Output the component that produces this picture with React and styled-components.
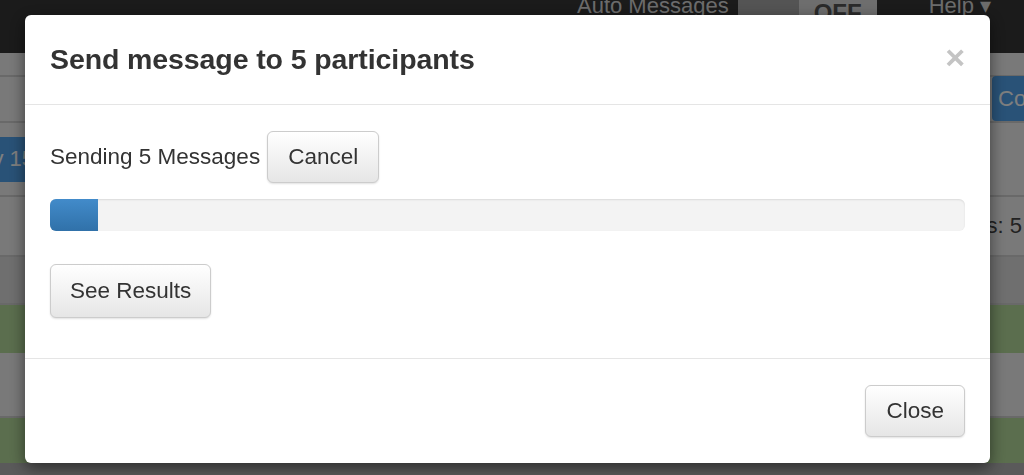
import React, { useState } from "react";
import styled, { createGlobalStyle } from "styled-components";

const GlobalStyle = createGlobalStyle`
    * { box-sizing: border-box; }
    html, body {
        margin: 0;
        padding: 0;
        width: 1024px;
        height: 475px;
        overflow: hidden;
        font-family: "Liberation Sans", Arial, Helvetica, sans-serif;
    }
`;

// the page that sits behind the dimmed overlay
const Page = styled.div`
    width: 1024px;
    height: 475px;
    background-color: #f2f2f2;
    display: flex;
    flex-direction: column;
`;

const Navbar = styled.div`
    height: 53px;
    background-color: #363636;
    display: flex;
    justify-content: flex-end;
    align-items: flex-start;
    padding-right: 33px;
`;

const NavText = styled.span`
    font-size: 22px;
    line-height: 22px;
    margin-top: -5px;
    color: #d8d8d8;
    margin-right: ${props => props.gap || 0}px;
`;

const Toggle = styled.div`
    display: flex;
    margin-top: -10px;
    margin-right: 52px;
    height: 37px;

    span {
        width: 61px;
        background-color: #a8a8a8;
    }

    b {
        width: 78px;
        background-color: #dcdcdc;
        color: #555;
        font-size: 24px;
        text-align: center;
        padding-top: 9px;
    }
`;

const Row = styled.div`
    height: ${props => props.h}px;
    display: flex;
    justify-content: space-between;
    align-items: ${props => props.align || "center"};
    border-bottom: ${props => props.line ? "2px solid #d2d2d2" : "none"};
    background-color: ${props => props.bg || "transparent"};
`;

const Tab = styled.div`
    background-color: #52a4ee;
    color: #fff;
    font-size: 22px;
    height: 45px;
    width: 120px;
    display: flex;
    align-items: center;
    justify-content: flex-end;
    padding-right: 4px;
    margin-left: -82px;
`;

const Compose = styled.div`
    background-color: #52a4ee;
    color: #fff;
    font-size: 22px;
    height: 45px;
    width: 120px;
    padding: 10px 0 0 6px;
    margin-right: -88px;
    border-radius: 4px 0 0 4px;
`;

const Stat = styled.span`
    font-size: 22px;
    color: #444;
    margin-right: 2px;
`;

// overlay and modal
const Backdrop = styled.div`
    position: fixed;
    inset: 0;
    background-color: rgba(0, 0, 0, 0.5);
`;

const Dialog = styled.div`
    position: fixed;
    top: 15px;
    left: 25px;
    width: 965px;
    height: 448px;
    background-color: #ffffff;
    border-radius: 6px;
    box-shadow: 0 5px 15px rgba(0, 0, 0, 0.5);
    display: flex;
    flex-direction: column;
    color: #333;
`;

const Header = styled.div`
    height: 90px;
    border-bottom: 1px solid #e5e5e5;
    display: flex;
    justify-content: space-between;
    align-items: center;
    padding: 0 25px;

    h4 {
        margin: 0;
        font-size: 28.5px;
        font-weight: 700;
        color: #333;
        letter-spacing: -0.1px;
    }
`;

const CloseX = styled.span`
    font-size: 34px;
    font-weight: 700;
    color: #c4c4c4;
    line-height: 1;
    margin-top: -6px;
`;

const Body = styled.div`
    padding: 26px 25px 40px;
    border-bottom: 1px solid #e5e5e5;
`;

const Status = styled.div`
    display: flex;
    align-items: center;
    gap: 7px;
    font-size: 22.5px;
`;

const Button = styled.button`
    font-family: inherit;
    font-size: 22.5px;
    color: #333;
    height: ${props => props.h || 52}px;
    padding: 0 ${props => props.pad || 20}px;
    border: 1px solid #cccccc;
    border-radius: 6px;
    background-image: linear-gradient(to bottom, #ffffff 0%, #e6e6e6 100%);
    box-shadow: 0 1px 2px rgba(0, 0, 0, 0.12);
`;

const Progress = styled.div`
    margin: 16px 0 33px;
    height: 32px;
    border-radius: 6px;
    background-color: #f3f3f3;
    box-shadow: inset 0 1px 2px rgba(0, 0, 0, 0.1);
    overflow: hidden;
`;

const Bar = styled.div`
    height: 100%;
    background-image: linear-gradient(to bottom, #428bca 0%, #3071a9 100%);
`;

const Footer = styled.div`
    flex: 1;
    display: flex;
    justify-content: flex-end;
    padding: 26px 25px 0;
`;

export default function App() {
    const [sent] = useState(0.0525);

    return (
        <>
            <GlobalStyle />
            <Page>
                <Navbar>
                    <NavText gap={9}>Auto Messages</NavText>
                    <Toggle>
                        <span />
                        <b>OFF</b>
                    </Toggle>
                    <NavText>Help ▾</NavText>
                </Navbar>
                <Row h={24} line />
                <Row h={46} line align="flex-end">
                    <span />
                    <Compose>Compose</Compose>
                </Row>
                <Row h={74} line>
                    <Tab>Day 15</Tab>
                </Row>
                <Row h={60} line>
                    <span />
                    <Stat>Participants: 5</Stat>
                </Row>
                <Row h={48} bg="#dedede" line />
                <Row h={48} bg="#b6dc9c" />
                <Row h={65} line />
                <Row h={45} bg="#b6dc9c" />
                <Row h={12} bg="#b4b4b4" />
            </Page>

            <Backdrop />
            <Dialog>
                <Header>
                    <h4>Send message to 5 participants</h4>
                    <CloseX>×</CloseX>
                </Header>
                <Body>
                    <Status>
                        <span>Sending 5 Messages</span>
                        <Button pad={20}>Cancel</Button>
                    </Status>
                    <Progress>
                        <Bar style={{ width: `${sent * 100}%` }} />
                    </Progress>
                    <Button h={54} pad={19}>See Results</Button>
                </Body>
                <Footer>
                    <Button pad={20}>Close</Button>
                </Footer>
            </Dialog>
        </>
    );
}
